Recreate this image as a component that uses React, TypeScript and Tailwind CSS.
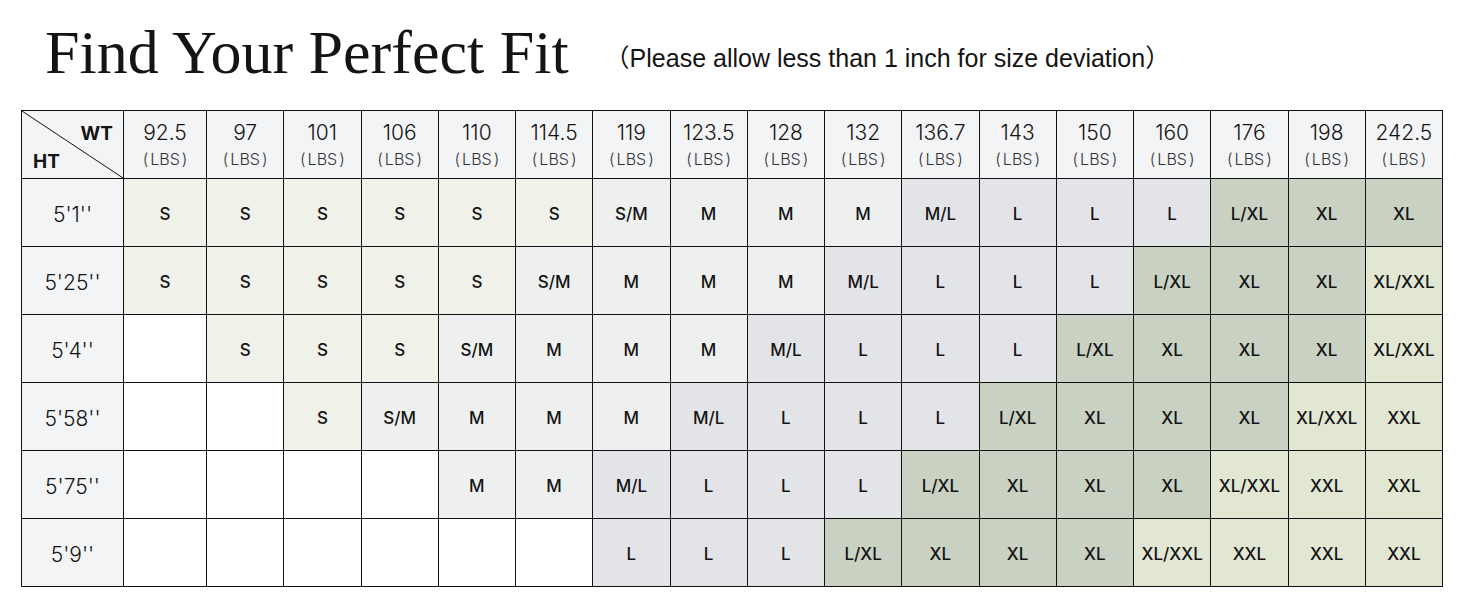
const weights = ['92.5', '97', '101', '106', '110', '114.5', '119', '123.5', '128', '132', '136.7', '143', '150', '160', '176', '198', '242.5']

const rows: { ht: string; sizes: string[] }[] = [
  { ht: "5'1''", sizes: ['S', 'S', 'S', 'S', 'S', 'S', 'S/M', 'M', 'M', 'M', 'M/L', 'L', 'L', 'L', 'L/XL', 'XL', 'XL'] },
  { ht: "5'25''", sizes: ['S', 'S', 'S', 'S', 'S', 'S/M', 'M', 'M', 'M', 'M/L', 'L', 'L', 'L', 'L/XL', 'XL', 'XL', 'XL/XXL'] },
  { ht: "5'4''", sizes: ['', 'S', 'S', 'S', 'S/M', 'M', 'M', 'M', 'M/L', 'L', 'L', 'L', 'L/XL', 'XL', 'XL', 'XL', 'XL/XXL'] },
  { ht: "5'58''", sizes: ['', '', 'S', 'S/M', 'M', 'M', 'M', 'M/L', 'L', 'L', 'L', 'L/XL', 'XL', 'XL', 'XL', 'XL/XXL', 'XXL'] },
  { ht: "5'75''", sizes: ['', '', '', '', 'M', 'M', 'M/L', 'L', 'L', 'L', 'L/XL', 'XL', 'XL', 'XL', 'XL/XXL', 'XXL', 'XXL'] },
  { ht: "5'9''", sizes: ['', '', '', '', '', '', 'L', 'L', 'L', 'L/XL', 'XL', 'XL', 'XL', 'XL/XXL', 'XXL', 'XXL', 'XXL'] },
]

// cell tint by size group
const tint: Record<string, string> = {
  '': 'bg-white',
  S: 'bg-[#f0f2e9]',
  'S/M': 'bg-[#edf0ef]',
  M: 'bg-[#edf0ef]',
  'M/L': 'bg-[#e3e4e8]',
  L: 'bg-[#e3e4e8]',
  'L/XL': 'bg-[#c9d1c3]',
  XL: 'bg-[#c9d1c3]',
  'XL/XXL': 'bg-[#e2e7d4]',
  XXL: 'bg-[#e2e7d4]',
}

const cell = 'flex items-center justify-center border-r border-b border-[#111]'

function CornerCell() {
  return (
    <div className={`${cell} relative bg-[#f3f4f6]`}>
      <svg className="absolute inset-0 h-full w-full" preserveAspectRatio="none" viewBox="0 0 100 100">
        <line x1="0" y1="0" x2="100" y2="100" stroke="#111" strokeWidth="1" vectorEffect="non-scaling-stroke" />
      </svg>
      <span className="absolute right-[10px] top-[13px] text-[19px] font-bold leading-none">WT</span>
      <span className="absolute bottom-[7px] left-[11px] text-[19px] font-bold leading-none">HT</span>
    </div>
  )
}

export default function App() {
  return (
    <div className="h-[600px] w-[1464px] bg-white text-[#141414] font-['Inter','Noto_Sans',sans-serif]">
      <div className="flex h-[110px] items-start">
        <h1 className="ml-[45px] mt-[21px] text-[62px] leading-none font-['Liberation_Serif','DejaVu_Serif',serif]">
          Find Your Perfect Fit
        </h1>
        <p className="ml-[36px] mt-[46px] text-[25px] leading-none font-['Liberation_Sans','Noto_Sans_CJK_SC',sans-serif]">
          （Please allow less than 1 inch for size deviation）
        </p>
      </div>

      <div className="mx-[21px] grid grid-cols-[102px_83px_repeat(16,minmax(0,1fr))] grid-rows-[68px_repeat(6,68px)] border-l border-t border-[#111]">
        <CornerCell />
        {weights.map((w) => (
          <div key={w} className={`${cell} flex-col bg-[#f3f4f6]`}>
            <span className="text-[21px] font-light leading-[24px]">{w}</span>
            <span className="mt-[5px] text-[16px] font-light leading-[18px] text-[#333]">
              (<span className="mx-[2px]">LBS</span>)
            </span>
          </div>
        ))}

        {rows.map((r) => (
          <>
            <div key={r.ht} className={`${cell} bg-[#f3f4f6] pt-[4px] text-[21px] font-light`}>{r.ht}</div>
            {r.sizes.map((s, i) => (
              <div key={r.ht + i} className={`${cell} ${tint[s]} pt-[4px] text-[17px] font-medium`}>
                {s}
              </div>
            ))}
          </>
        ))}
      </div>
    </div>
  )
}
